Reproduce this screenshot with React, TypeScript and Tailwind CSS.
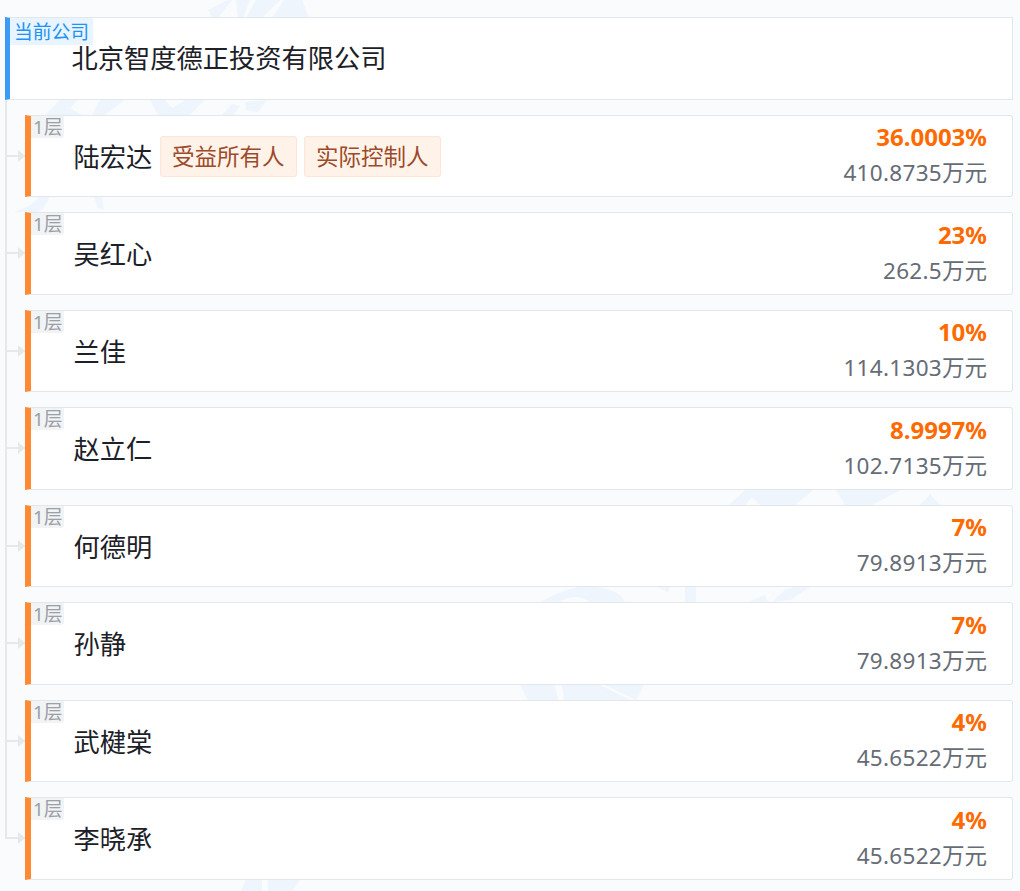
const holders = [
  { name: '陆宏达', percent: '36.0003%', amount: '410.8735', tags: ['受益所有人', '实际控制人'] },
  { name: '吴红心', percent: '23%', amount: '262.5', tags: [] },
  { name: '兰佳', percent: '10%', amount: '114.1303', tags: [] },
  { name: '赵立仁', percent: '8.9997%', amount: '102.7135', tags: [] },
  { name: '何德明', percent: '7%', amount: '79.8913', tags: [] },
  { name: '孙静', percent: '7%', amount: '79.8913', tags: [] },
  { name: '武楗棠', percent: '4%', amount: '45.6522', tags: [] },
  { name: '李晓承', percent: '4%', amount: '45.6522', tags: [] },
];

function HolderRow({ holder, last }: { holder: (typeof holders)[number]; last: boolean }) {
  return (
    <div className="relative h-[82.5px] flex">
      {/* tree connector */}
      <div className="absolute left-[-20px] top-[40px] w-[20px] h-[2px] bg-[#e4e9ee]" />
      <div className="absolute left-[-7px] top-[35px] w-0 h-0 border-y-[6px] border-y-transparent border-l-[7px] border-l-[#e4e9ee]" />
      {last && <div className="absolute left-[-20px] top-[-60px] w-[2px] h-[102px] bg-[#e4e9ee]" />}

      <div className="relative flex-1 flex items-center justify-between bg-white border border-[#e2e7ec] border-l-[6px] border-l-[#ff8a33] rounded-r-[3px] pl-[42.5px] pr-[25px]">
        <span className="absolute left-0 top-0 h-[22px] px-[2px] bg-[#f1f3f5] rounded-br-[3px] text-[18.75px] leading-[21px] text-[#9aa0a6]">
          1层
        </span>
        <div className="flex items-center">
          <span className="text-[26.25px] leading-[36px] text-[#1c2127] mt-[1px]">{holder.name}</span>
          <div className="flex gap-[7px] ml-[7.5px] mt-[1px]">
            {holder.tags.map((tag) => (
              <span
                key={tag}
                className="h-[41px] px-[11.25px] pt-[1px] flex items-center bg-[#fff3e9] border border-[#fde6d5] rounded-[3px] text-[22.5px] text-[#9c4a2a]"
              >
                {tag}
              </span>
            ))}
          </div>
        </div>
        <div className="flex flex-col items-end mt-[-2px]">
          <span className="text-[24px] leading-[36px] font-bold text-[#ff6a00]">{holder.percent}</span>
          <span className="text-[22.5px] leading-[36px] text-[#666c75]">
            <span className="tracking-[0.3px]">{holder.amount}</span>万元
          </span>
        </div>
      </div>
    </div>
  );
}

export default function App() {
  return (
    <div
      className="relative h-[891px] overflow-hidden bg-[#f9fbfd] pl-[5px] pr-[7px] pt-[17.25px]"
      style={{ fontFamily: '"Noto Sans", "Noto Sans CJK SC", sans-serif' }}
    >
      {/* faint watermark, only shows in the gaps between cards */}
      <svg className="absolute inset-0 pointer-events-none" width="1020" height="891" fill="none">
        <g fill="#eef5fc">
          <path d="M208 10 L228 0 L232 0 L218 18 L212 18 Z" />
          <path d="M236 0 L250 0 L243 18 L238 18 Z" />
          <path d="M256 0 L280 0 L262 18 L246 18 Z" />
          <path d="M284 0 L302 0 L309 18 L272 18 Z" />
          <path d="M45 115 L60 100 L78 100 L70 108 L82 115 Z" />
          <path d="M100 100 L124 100 L105 115 L92 115 Z" />
          <path d="M150 100 L165 100 L172 108 L186 100 L204 100 L190 115 L158 115 Z" />
          <path d="M222 115 L232 104 L240 106 L234 115 Z" />
          <path d="M245 102 L267 100 L258 112 L246 110 Z" />
          <path d="M13 212 Q34 206 38 197 L49 197 Q46 208 38 212 Z" />
          <path d="M94 197 L102 197 L104 210 L98 208 Z" />
          <path d="M729 505 L745 490 L770 490 L756 497 L766 490 L813 490 L795 505 L760 505 L752 497 L745 505 Z" />
          <path d="M836 490 L901 490 L872 505 L845 505 Z" />
          <path d="M920 505 L930 494 L940 505 Z" />
          <path d="M540 602 Q575 583 596 587 Q620 590 625 602 L590 602 Q575 592 560 602 Z" />
          <path d="M657 587 L670 587 L668 592 Z" />
          <path d="M685 587 L696 587 L696 602 L685 602 Z" />
          <path d="M748 602 L765 595 L768 602 Z" />
          <path d="M772 602 L785 590 L795 587 L810 587 L790 600 Z" />
          <path d="M520 685 L555 685 L558 700 L528 700 Z" />
          <path d="M562 685 L600 685 L630 700 L564 700 Z" />
          <path d="M605 685 L644 685 L636 700 Z" />
          <path d="M241 891 L246 880 L262 880 L262 891 Z" />
          <path d="M268 880 L300 880 L292 891 L268 891 Z" />
        </g>
      </svg>

      <div className="relative flex flex-col">
        <div className="relative h-[82.5px] bg-white border border-[#e2e7ec] border-l-[5px] border-l-[#3b9bf5] pl-[61.5px]">
          <span className="absolute left-0 top-0 h-[27px] px-[4px] bg-[#e8f4ff] text-[18.75px] leading-[27px] text-[#2192f3] whitespace-nowrap">
            当前公司
          </span>
          <div className="pt-[22px] text-[26.25px] leading-[36px] text-[#1c2127]">北京智度德正投资有限公司</div>
        </div>

        <div className="ml-[20px] mt-[15px] flex flex-col gap-[15px]">
          {holders.map((holder, i) => (
            <HolderRow key={holder.name} holder={holder} last={i === holders.length - 1} />
          ))}
        </div>
        <div className="absolute left-0 top-[83px] w-[2px] h-[690px] bg-[#e4e9ee]" />
      </div>
    </div>
  );
}
